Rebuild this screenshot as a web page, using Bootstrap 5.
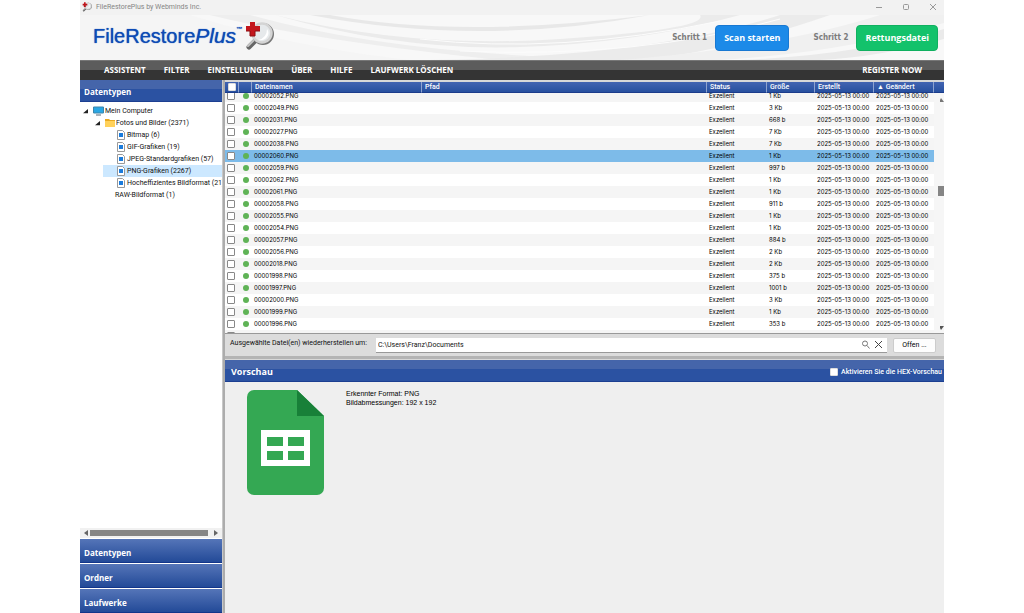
<!DOCTYPE html>
<html lang="de">
<head>
<meta charset="utf-8">
<meta name="viewport" content="width=device-width, initial-scale=1">
<title>FileRestorePlus by Webminds Inc.</title>
<link href="https://cdn.jsdelivr.net/npm/bootstrap@5.3.0/dist/css/bootstrap.min.css" rel="stylesheet">
<style>
body{background:#fff;font:7px/12px Roboto,sans-serif;color:#111}
.app{margin:0 80px;min-height:100vh;background:#efefef}
button{font:inherit}
.titlebar{height:15px;padding-bottom:2px!important;background:#f2f2f2;color:#858585;padding:0 6px 0 2px}
.titlebar svg,.titlebar button{display:block}
.winbtn{border:0;background:none;padding:0;width:10px;height:10px}
.banner{height:45px;background:#f4f4f4;padding:0 6px 0 13px;overflow:hidden}
.swoosh{inset:0;width:100%;height:100%}
.logo{font:20px/24px "Liberation Sans",sans-serif;color:#0d4bb5;text-shadow:0 0 1px #0d4bb5;text-decoration:none;padding-bottom:4px}
.logo:hover{color:#0d4bb5}
.logo i{font-size:21px}
.logo sup{font-size:6px;top:-12px;font-weight:700}
.step{font:700 8px/12px "DejaVu Sans Condensed",sans-serif;color:#7c7c7c}
.big{font:700 9px/12px "Open Sans",sans-serif;color:#fff;height:26px;border-radius:4px;padding:0 8px;border:1px solid}
.big:hover{color:#fff}
.scan{background:#1c8ae8;border-color:#1878d2}
.rescue{background:#13c26b;border-color:#10b060}
.menubar{height:20px;background:linear-gradient(#5c5c5c 0 50%,#343434 50%);border-top:1px solid #777;padding:0 22px 0 24px;gap:18px}
.menubar a{font:700 8px/16px "Open Sans",sans-serif;color:#fff;text-decoration:none;padding-bottom:2px}
.side{width:142px;background:#fff}
.splitter{width:3px;background:#acacac;border-left:1px solid #c8c8c8}
.bluebar{font:700 8px/12px "Open Sans",sans-serif;color:#fff;background:linear-gradient(#4565aa 0 45%,#2b52a2 45%);height:22px;border-bottom:1px solid #1c3f91}
.side .bluebar{padding:3px 0 0 4px}
.acc{font:700 8px/12px "Open Sans",sans-serif;color:#fff;text-align:left;height:24px;padding:4px 4px 0;border:0;border-bottom:1px solid #12358a;background:linear-gradient(#5575b8,#234a98)}
.tree{padding-top:3px;color:#111}
.tree div{height:12px;white-space:nowrap;gap:2px}
.tree svg{flex:none}
.l1{padding-left:3px}.l2{padding-left:15px}.l3{padding-left:37px}.l2b{padding-left:35px}
.tree .l1,.tree .l2{gap:1px}
.picked{background:#cce8ff;margin-left:23px}.picked.l3{padding-left:14px}
.hscroll{height:10px;background:#f1f1f1;padding:0 4px;gap:2px;margin-bottom:1px}
.thumb{background:#858585;height:6px}
.files{height:254px;border-top:2px solid #d8d8d8;border-bottom:1px solid #999;background:#fff}
.filescroll{height:100%;overflow:hidden}
.files table{width:100%;table-layout:fixed;border-collapse:separate;border-spacing:0;font:6px/12px Inter,sans-serif;color:#000}
.files th,.files td{padding:0 0 0 2px;height:12px;white-space:nowrap;overflow:hidden;vertical-align:middle}
.files th{position:sticky;top:0;z-index:1;font:500 7px/10px Roboto,sans-serif;color:#fff;background:linear-gradient(#4264b2,#27509f);border-right:1px solid #8fa3cf;border-bottom:1px solid #1b3c8b;padding-left:3px;height:11px}
.files th:last-child{border-right:0}
.files tbody tr:nth-child(odd) td{background:#f5f5f5}
.files tbody tr.sel td{background:#7dbbe9}
.files tbody tr td:last-child{background:#f6f6f6!important}
.files input,.hex input{appearance:none;display:block;width:8px;height:8px;margin:0;border:1px solid #888;border-radius:1px;background:#fff}
.files th input,.hex input{border-color:#ddd}
.dot{display:block;width:6px;height:6px;border-radius:50%;background:#5fb356;margin:0 2px}
.vscroll{top:13px;right:0;bottom:0;width:8px}
.vscroll .knob{width:6px;height:10px;background:#858585;margin-left:2px}
.restore{height:22px;background:#dcdcdc;padding:0 8px 0 5px}
.restore label{padding-bottom:5px}
.path{background:#fff;height:15px;border-bottom:1px solid #999;margin-left:9px;padding-right:4px;gap:4px}
.path input{border:0;outline:0;background:none;font:7px/12px Roboto,sans-serif;padding:0 2px;min-width:0;color:#111}
.path button{border:0;background:none;padding:0;line-height:0}
.open{height:15px;width:43px;border:1px solid #ccc;border-radius:2px;background:#fdfdfd;padding:0;margin-left:6px}
.rule{height:4px;background:#b4b4b4;border-bottom:1px solid #d8d8d8}
.vorschau{padding:2px 2px 0 6px}
.vorschau>span{font-size:9px}
.hex{font:500 7px/12px Roboto,sans-serif}
.preview{padding:8px 22px;gap:22px}
.preview p{font:7px/9px "Liberation Sans",sans-serif;margin:-1px 0 0;color:#000}
</style>
<script src="https://cdn.jsdelivr.net/npm/bootstrap@5.3.0/dist/js/bootstrap.bundle.min.js"></script>
</head>
<body>
<svg width="0" height="0" class="position-absolute">
<defs>
<symbol id="mark-glass" viewBox="0 0 30 30"><path d="M5 26l6-6" stroke="#666" stroke-width="5" stroke-linecap="round"/><path d="M4 25l7-7" stroke="#c4c4c4" stroke-width="2" stroke-linecap="round"/><circle cx="19" cy="13" r="9.500" fill="#eceef0" stroke="#777" stroke-width="3"/><circle cx="18" cy="12" r="9.500" fill="#e6e9eb" stroke="#d4d4d4" stroke-width="2.500"/><path d="M14 19q9-2 9-11q3 4 0 8t-9 3z" fill="#fff"/><path d="M6 1h5v4h5v5h-5v5H6v-5H2V5h4z" fill="#c3161c"/><path d="M2 10h4v5h5v-5h5" stroke="#8c0f13" fill="none"/></symbol>
<symbol id="leaf" viewBox="0 0 8 10"><path d="M.5.5h5l2 2v7h-7z" fill="#fff" stroke="#999"/><path d="M2 3h4v4H2z" fill="#1a7bdc"/></symbol>
<symbol id="open-node" viewBox="0 0 6 6"><path d="M6 0v5H0z" fill="#222"/></symbol>
</defs></svg>

<div class="app d-flex flex-column">
<header>
<div class="titlebar d-flex align-items-center justify-content-between">
<span class="d-flex align-items-center gap-1"><svg width="10" height="10"><use href="#mark-glass"/></svg>FileRestorePlus by Webminds Inc.</span>
<span class="d-flex" style="gap:17px">
<button class="winbtn" aria-label="Minimieren"><svg width="10" height="10"><path d="M2 5.500h6" stroke="#999"/></svg></button>
<button class="winbtn" aria-label="Maximieren"><svg width="10" height="10"><rect x="2.500" y="2.500" width="5" height="5" rx="1" fill="none" stroke="#999"/></svg></button>
<button class="winbtn" aria-label="Schließen"><svg width="10" height="10"><path d="M2 2l6 6M8 2l-6 6" stroke="#999"/></svg></button>
</span>
</div>
<div class="banner position-relative d-flex align-items-center justify-content-between">
<svg class="swoosh position-absolute" viewBox="0 0 864 45" preserveAspectRatio="none">
<rect width="864" height="45" fill="#f8f8f8"/>
<path d="M0 0H110Q220 34 330 45H0z" fill="#f5f5f5"/>
<path d="M130 0Q230 25 420 45H640Q340 48 170 0z" fill="#eee"/>
<path d="M195 0Q330 34 480 24T620 0H660Q560 28 440 32T195 0z" fill="#ebebeb"/>
<path d="M250 0Q380 24 570 0Q400 32 230 0z" fill="#e8e8e8"/>
<path d="M320 45Q560 45 700 0H750Q640 38 560 45z" fill="#ebebeb"/>
<path d="M540 45Q700 32 800 0H864V8Q760 38 640 45z" fill="#f0f0f0"/>
<path d="M660 45Q780 40 864 14V24Q800 42 740 45z" fill="#eaeaea"/>
<path d="M340 24Q480 40 640 6M380 36Q560 44 700 4" stroke="#fcfcfc" fill="none"/>
</svg>
<a class="logo position-relative d-flex align-items-center" href="#"><span>FileRestore<i>Plus</i><sup>™</sup></span><svg style="margin-left:2px" width="30" height="30"><use href="#mark-glass"/></svg></a>
<div class="position-relative d-flex align-items-center">
<span class="step me-2">Schritt 1</span><button class="btn big scan">Scan starten</button>
<span class="step me-2 ms-4">Schritt 2</span><button class="btn big rescue">Rettungsdatei</button>
</div>
</div>
<nav class="menubar d-flex align-items-center">
<a href="#">ASSISTENT</a><a href="#">FILTER</a><a href="#">EINSTELLUNGEN</a><a href="#">ÜBER</a><a href="#">HILFE</a><a href="#">LAUFWERK LÖSCHEN</a><a class="ms-auto" href="#">REGISTER NOW</a>
</nav>
</header>

<div class="d-flex flex-grow-1">
<aside class="side d-flex flex-column flex-shrink-0">
<div class="bluebar d-flex align-items-center">Datentypen</div>
<div class="tree flex-grow-1 overflow-hidden">
<div class="l1 d-flex align-items-center"><svg width="5" height="5"><use href="#open-node"/></svg><svg class="ms-1" width="11" height="10" viewBox="0 0 11 10"><path d="M.5 1h10v6H.5z" fill="#2aa7e4" stroke="#3d86ab"/><path d="M3 9h5" stroke="#567"/></svg>Mein Computer</div>
<div class="l2 d-flex align-items-center"><svg width="5" height="5"><use href="#open-node"/></svg><svg class="ms-1" width="10" height="8" viewBox="0 0 10 8"><path d="M0 0h4l1 1h5v7H0z" fill="#e9a91f"/><path d="M0 2h10v6H0z" fill="#ffd15a"/></svg>Fotos und Bilder (2371)</div>
<div class="l3 d-flex align-items-center"><svg width="8" height="10"><use href="#leaf"/></svg>Bitmap (6)</div>
<div class="l3 d-flex align-items-center"><svg width="8" height="10"><use href="#leaf"/></svg>GIF-Grafiken (19)</div>
<div class="l3 d-flex align-items-center"><svg width="8" height="10"><use href="#leaf"/></svg>JPEG-Standardgrafiken (57)</div>
<div class="l3 picked d-flex align-items-center"><svg width="8" height="10"><use href="#leaf"/></svg>PNG-Grafiken (2267)</div>
<div class="l3 d-flex align-items-center"><svg width="8" height="10"><use href="#leaf"/></svg>Hocheffizientes Bildformat (21)</div>
<div class="l2b">RAW-Bildformat (1)</div>
</div>
<div class="hscroll d-flex align-items-center"><svg width="4" height="6"><path d="M4 0v6L0 3z" fill="#666"/></svg><div class="thumb flex-grow-1 me-1"></div><svg width="4" height="6"><path d="M0 0v6l4-3z" fill="#666"/></svg></div>
<div class="d-grid" style="gap:1px"><button class="acc">Datentypen</button><button class="acc">Ordner</button><button class="acc">Laufwerke</button></div>
</aside>
<div class="splitter flex-shrink-0"></div>

<main class="flex-grow-1 overflow-hidden">
<div class="files position-relative">
<div class="filescroll" id="scroller">
<table>
<colgroup><col style="width:14px"><col style="width:13px"><col style="width:170px"><col><col style="width:60px"><col style="width:48px"><col style="width:59px"><col style="width:60px"><col style="width:10px"></colgroup>
<thead><tr><th><input type="checkbox" aria-label="Alle auswählen"></th><th></th><th>Dateinamen</th><th>Pfad</th><th>Status</th><th>Größe</th><th>Erstellt</th><th>▲ Geändert</th><th></th></tr></thead>
<tbody id="rows"></tbody>
</table>
</div>
<div class="vscroll position-absolute d-flex flex-column">
<svg class="ms-1" width="5" height="8" viewBox="1 0 5 8"><path d="M0 7l2-4 3 4z" fill="#777"/></svg>
<div style="flex:83"></div><div class="knob"></div><div style="flex:130"></div>
<svg class="ms-1" width="5" height="8" viewBox="1 0 5 8"><path d="M0 1l2 4 3-4z" fill="#555"/></svg>
</div>
</div>
<div class="restore d-flex align-items-center">
<label for="target">Ausgewählte Datei(en) wiederherstellen um:</label>
<div class="path d-flex align-items-center flex-grow-1"><input id="target" class="flex-grow-1" value="C:\Users\Franz\Documents"><button aria-label="Suchen"><svg width="9" height="9"><circle cx="4" cy="3.500" r="2.500" fill="none" stroke="#777"/><path d="M6 5.500l2.500 3" stroke="#777"/></svg></button><button aria-label="Leeren"><svg width="9" height="9"><path d="M1 1l7 7M8 1L1 8" stroke="#444"/></svg></button></div>
<button class="open">Offen ...</button>
</div>
<div class="rule"></div>
<div class="bluebar vorschau d-flex align-items-center justify-content-between"><span>Vorschau</span><label class="hex d-flex align-items-center" style="gap:3px"><input type="checkbox">Aktivieren Sie die HEX-Vorschau</label></div>
<div class="preview d-flex align-items-start">
<svg width="77" height="105" viewBox="0 0 77 105"><path d="M7 0h43l27 26v72a7 7 0 0 1-7 7H7a7 7 0 0 1-7-7V7a7 7 0 0 1 7-7z" fill="#34a853"/><path d="M50 0l27 26H50z" fill="#188038"/><path d="M14 40h49v36H14z" fill="#fff"/><path d="M20 47h16v9H20zM41 47h16v9H41zM20 61h16v9H20zM41 61h16v9H41z" fill="#34a853"/></svg>
<p>Erkennter Format: PNG<br>Bildabmessungen: 192 x 192</p>
</div>
</main>
</div>
</div>
<script>
const files=[["2052","1 Kb"],["2049","3 Kb"],["2031","668 b"],["2027","7 Kb"],["2038","7 Kb"],["2060","1 Kb"],["2059","997 b"],["2062","1 Kb"],["2061","1 Kb"],["2058","911 b"],["2055","1 Kb"],["2054","1 Kb"],["2057","884 b"],["2056","2 Kb"],["2018","2 Kb"],["1998","375 b"],["1997","1001 b"],["2000","3 Kb"],["1999","1 Kb"],["1996","353 b"],["1995","371 b"]];
const stamp="2025-05-13 00:00";
document.getElementById("rows").innerHTML=files.map(([n,s])=>`<tr${n==="2060"?' class="sel"':''}><td><input type="checkbox" aria-label="0000${n}.PNG"></td><td><span class="dot"></span></td><td>0000${n}.PNG</td><td></td><td>Exzellent</td><td>${s}</td><td>${stamp}</td><td>${stamp}</td><td></td></tr>`).join("");
document.getElementById("scroller").scrollTop=3;
</script>
</body>
</html>
